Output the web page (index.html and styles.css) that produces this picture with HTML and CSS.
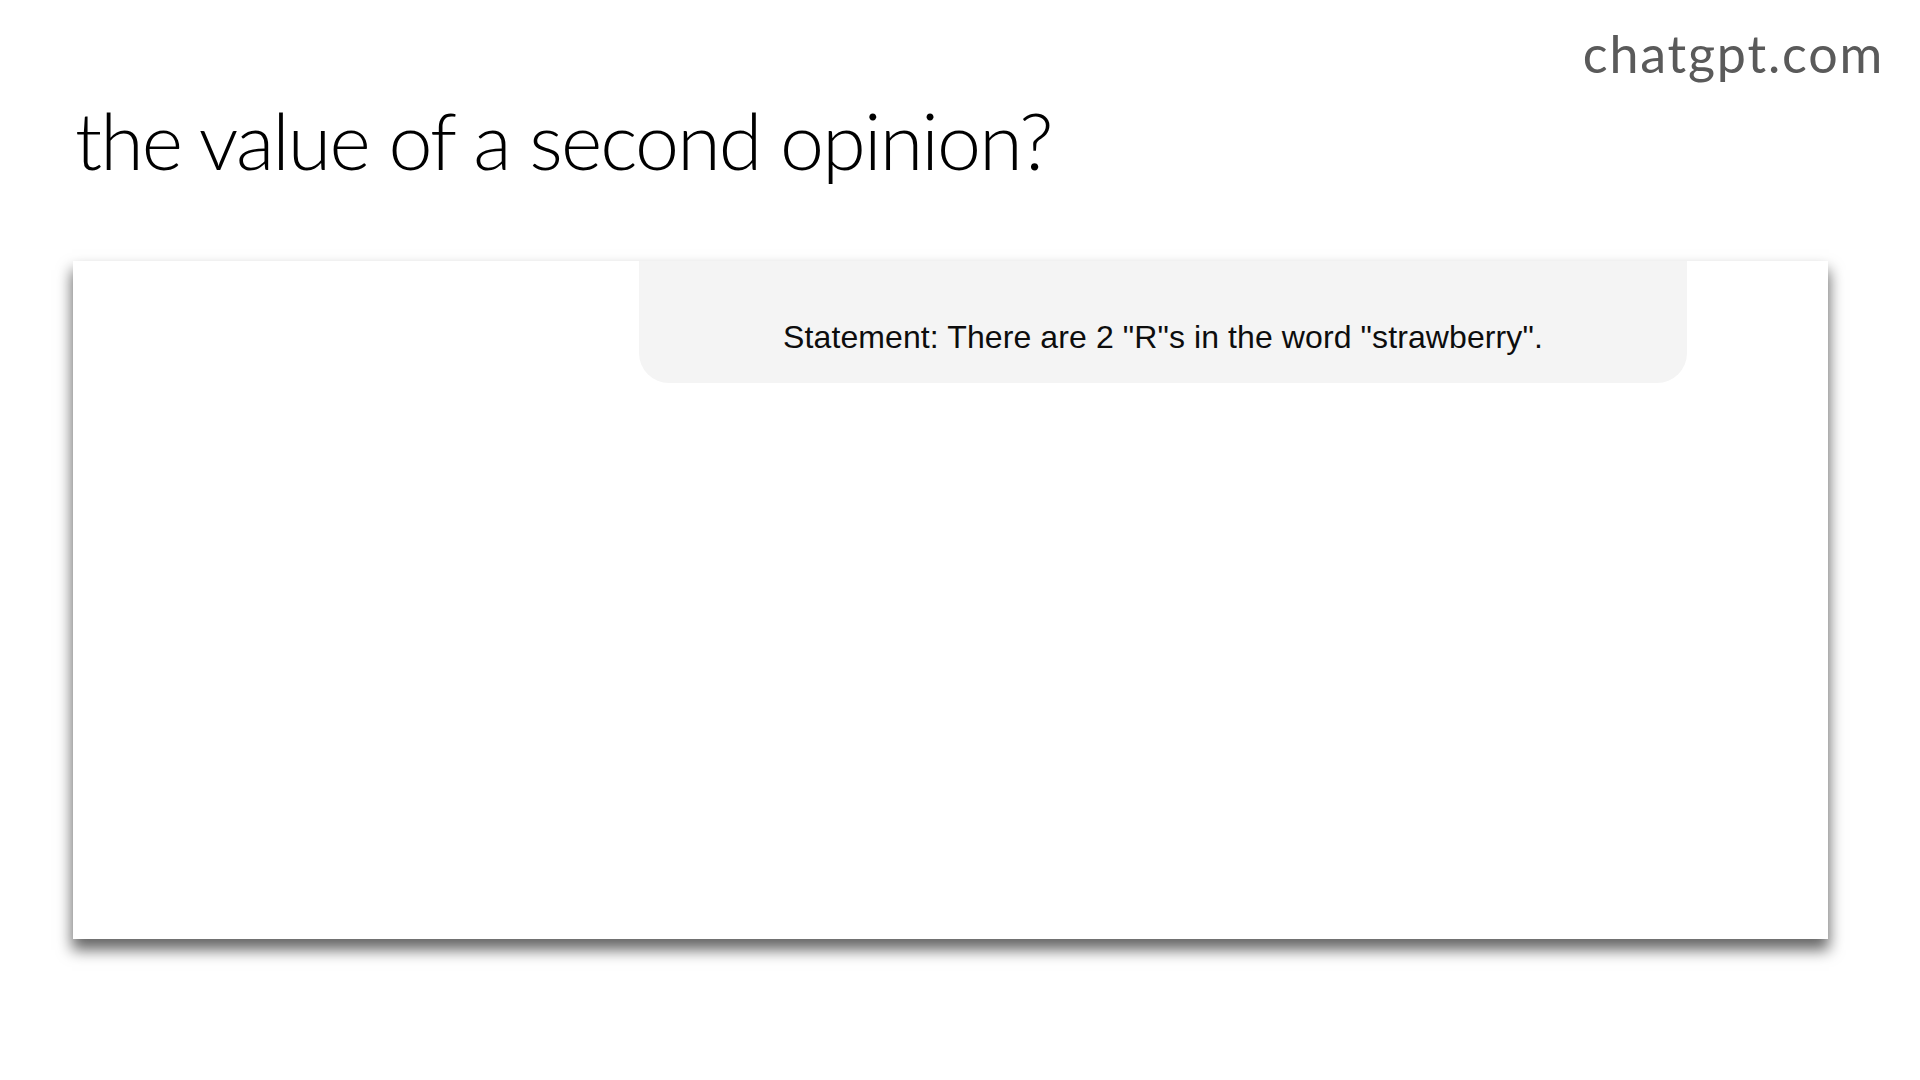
FILE: index.html
```html
<!DOCTYPE html>
<html lang="en">
<head>
<meta charset="utf-8">
<title>the value of a second opinion?</title>
<link rel="stylesheet" href="styles.css">
</head>
<body>
<div class="slide">
  <div class="site">chatgpt.com</div>
  <h1 class="title">the value of a second opinion?</h1>
  <div class="card">
    <div class="bubble">Statement: There are 2 "R"s in the word "strawberry".</div>
  </div>
</div>
</body>
</html>
```

FILE: styles.css
```css
html, body {
  margin: 0;
  padding: 0;
  background: #ffffff;
}

.slide {
  width: 1920px;
  height: 1080px;
  box-sizing: border-box;
  padding: 0 36px 0 73px;
  display: flex;
  flex-direction: column;
  overflow: hidden;
}

.site {
  margin-top: 23px;
  align-self: flex-end;
  font-family: "Lato", "Noto Sans", sans-serif;
  font-weight: 400;
  font-size: 52px;
  line-height: 60px;
  letter-spacing: 1.8px;
  color: #5a5a5a;
}

.title {
  margin: 9px 0 0 2px;
  font-family: "Lato", "Noto Sans", sans-serif;
  font-weight: 300;
  font-size: 79px;
  line-height: 95px;
  letter-spacing: -1.85px;
  color: #000000;
}

.card {
  margin: 74px 56px 0 0;
  height: 678px;
  background: #ffffff;
  box-shadow: 0 10px 14px 1px rgba(0, 0, 0, 0.6);
  display: flex;
  flex-direction: column;
}

.bubble {
  margin: 0 141px 0 566px;
  padding: 52px 20px 22px;
  background: #f4f4f4;
  border-radius: 0 0 30px 30px;
  font-family: "Liberation Sans", Arial, sans-serif;
  font-size: 32px;
  line-height: 48px;
  letter-spacing: 0.1px;
  color: #0d0d0d;
  text-align: center;
}
```
